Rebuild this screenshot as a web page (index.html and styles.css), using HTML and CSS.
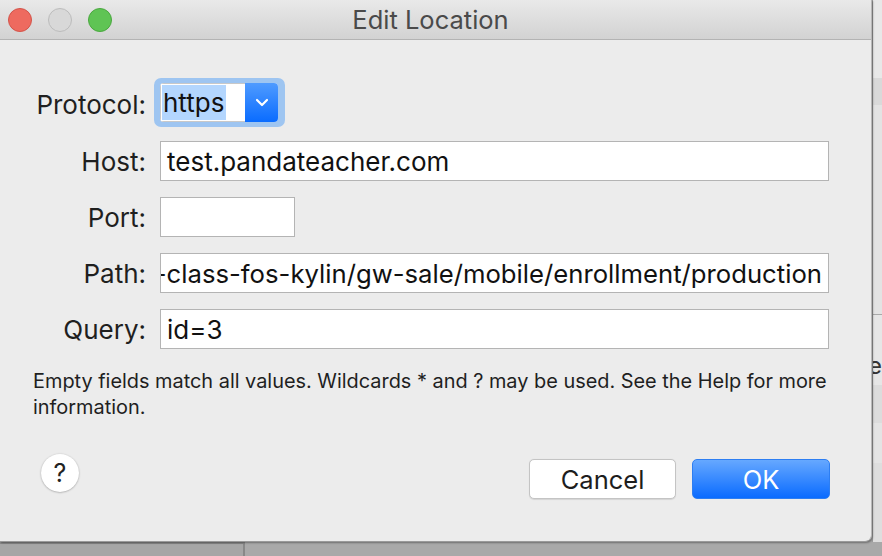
FILE: index.html
```html
<!DOCTYPE html>
<html>
<head>
<meta charset="utf-8">
<link rel="stylesheet" href="styles.css">
</head>
<body>
<div class="desktop">
  <div class="dialog">
    <div class="titlebar">
      <div class="lights">
        <span class="light red"></span>
        <span class="light grey"></span>
        <span class="light green"></span>
      </div>
      <div class="title">Edit Location</div>
    </div>
    <div class="content">
      <div class="form">
        <label class="label">Protocol:</label>
        <div class="combo-ring">
          <div class="combo">
            <div class="combo-text"><span class="sel">https</span></div>
            <div class="combo-btn">
              <svg width="14" height="9" viewBox="0 0 14 9"><path d="M2 2 L7 7 L12 2" fill="none" stroke="#fff" stroke-width="2.2" stroke-linecap="round" stroke-linejoin="round"/></svg>
            </div>
          </div>
        </div>
        <label class="label">Host:</label>
        <div class="field">test.pandateacher.com</div>
        <label class="label">Port:</label>
        <div class="field port"></div>
        <label class="label">Path:</label>
        <div class="field scrolled"><span>-class-fos-kylin/gw-sale/mobile/enrollment/production</span></div>
        <label class="label">Query:</label>
        <div class="field">id=3</div>
      </div>
      <p class="hint">Empty fields match all values. Wildcards * and ? may be used. See the Help for more information.</p>
      <div class="actions">
        <button class="help">?</button>
        <div class="spacer"></div>
        <button class="btn cancel">Cancel</button>
        <button class="btn ok">OK</button>
      </div>
    </div>
  </div>
  <div class="side">
    <div class="side-band b1"></div>
    <div class="side-band b2"></div>
    <div class="side-band b3"></div>
    <div class="side-band b4"><span class="side-e">e</span></div>
    <div class="side-band b5"></div>
    <div class="side-band b6"></div>
    <div class="side-band b7"></div>
  </div>
  <div class="bottom">
    <div class="bottom-left"></div>
    <div class="bottom-right"></div>
  </div>
</div>
</body>
</html>
```
FILE: styles.css
```css
* { box-sizing: border-box; }
html, body { margin: 0; padding: 0; }
body {
  width: 882px;
  height: 556px;
  overflow: hidden;
  background: #a7a7a7;
  font-family: Inter, "Noto Sans", "Liberation Sans", sans-serif;
  color: #1e1e1e;
}
.desktop {
  display: grid;
  grid-template-columns: 872px 10px;
  grid-template-rows: 542px 14px;
  width: 882px;
  height: 556px;
  overflow: hidden;
}
.dialog {
  grid-row: 1;
  grid-column: 1;
  background: #ececec;
  border-bottom-right-radius: 7px;
  box-shadow: 1px 1px 2px rgba(0,0,0,0.35);
  display: flex;
  flex-direction: column;
  position: relative;
  z-index: 2;
  border-right: 1px solid #b8b8b8;
  border-bottom: 1px solid #9a9a9a;
}
.titlebar {
  height: 40px;
  background: linear-gradient(#e9e9e9, #d2d2d2);
  border-bottom: 1px solid #b3b3b3;
  display: flex;
  align-items: center;
  position: relative;
}
.lights {
  display: flex;
  gap: 16px;
  padding-left: 8px;
  padding-top: 1px;
}
.light {
  width: 24px;
  height: 24px;
  border-radius: 50%;
  display: block;
}
.red { background: #ee6a5f; border: 1px solid #d3544a; }
.grey { background: #d8d8d8; border: 1px solid #bcbcbc; }
.green { background: #5fc454; border: 1px solid #4aa83f; }
.title {
  flex: 1;
  text-align: center;
  font-size: 25.5px;
  color: #4a4a4a;
  margin-left: -122px;
}
.content {
  flex: 1;
  display: flex;
  flex-direction: column;
  padding: 44px 41px 0 33px;
}
.form {
  display: grid;
  grid-template-columns: 113px 669px;
  column-gap: 14px;
  row-gap: 16px;
  align-items: center;
}
.label {
  text-align: right;
  font-size: 26px;
  color: #1f1f1f;
  white-space: nowrap;
}
.field {
  height: 40px;
  background: #fff;
  border: 1px solid #b4b4b4;
  font-size: 26px;
  color: #111;
  padding: 0 6px;
  display: flex;
  align-items: center;
  white-space: nowrap;
  overflow: hidden;
}
.field.port { width: 135px; }
.field.scrolled { justify-content: flex-end; padding-right: 6px; padding-left: 1px; font-size: 25.7px; }
.combo-ring {
  justify-self: start;
  margin: -6px 0 -2px -6px;
  padding: 5px 7px 5px 6px;
  background: #9ec5f1;
  border-radius: 7px;
}
.combo {
  display: flex;
  height: 39px;
  width: 118px;
  border-radius: 4px;
  overflow: hidden;
  background: #fff;
}
.combo-text {
  flex: 1;
  display: flex;
  align-items: center;
  padding-left: 1px;
  border: 1px solid #c8c8c8;
  border-right: none;
}
.sel {
  background: #b3d6fe;
  font-size: 26px;
  color: #111;
  height: 35px;
  line-height: 35px;
  padding: 0 2px 0 1px;
}
.combo-btn {
  width: 33px;
  background: linear-gradient(#4f9bff, #0a6cff);
  display: flex;
  align-items: center;
  justify-content: center;
}
.hint {
  margin: 19px -8px 0 0;
  font-size: 19.9px;
  line-height: 26px;
  color: #1f1f1f;
}
.actions {
  display: flex;
  align-items: center;
  margin-top: 39px;
}
.help {
  width: 38px;
  height: 38px;
  margin-left: 8px;
  margin-top: -12px;
  border-radius: 50%;
  background: #fff;
  border: none;
  box-shadow: 0 0.5px 2px rgba(0,0,0,0.35);
  font-family: inherit;
  font-size: 25px;
  color: #222;
  padding: 0;
}
.spacer { flex: 1; }
.btn {
  height: 40px;
  border-radius: 5px;
  font-family: inherit;
  font-size: 25.5px;
  padding: 0;
}
.cancel {
  width: 147px;
  background: #fff;
  border: 1px solid #c4c4c4;
  color: #1d1d1d;
  box-shadow: 0 0.5px 1px rgba(0,0,0,0.1);
}
.ok {
  width: 138px;
  margin-left: 16px;
  background: linear-gradient(#66a8ff, #0a6bff);
  border: 1px solid #2d7ef2;
  color: #fff;
}
.side {
  grid-row: 1;
  grid-column: 2;
  display: flex;
  flex-direction: column;
  background: #e2e2e2;
  border-left: 1px solid #9e9e9e;
  overflow: hidden;
}
.side-band { width: 100%; }
.b1 { height: 78px; background: #e8e8e8; }
.b2 { height: 27px; background: #d9d9d9; }
.b3 { height: 210px; background: #e3e3e3; border-bottom: 1px solid #a9a9a9; }
.b4 { height: 70px; background: #e6e6e6; overflow: hidden; padding-top: 39px; }
.side-e { display: block; font-size: 24px; line-height: 24px; margin-left: -5px; color: #333; }
.b5 { height: 38px; background: #dcdcdc; }
.b6 { height: 40px; background: #e4e4e4; }
.b7 { flex: 1; background: #dedede; }
.bottom {
  grid-row: 2;
  grid-column: 1 / span 2;
  display: flex;
}
.bottom-left {
  width: 245px;
  background: #a6a6a6;
  border-top: 2px solid #888;
  border-right: 2px solid #888;
}
.bottom-right { flex: 1; background: #a9a9a9; }
```
